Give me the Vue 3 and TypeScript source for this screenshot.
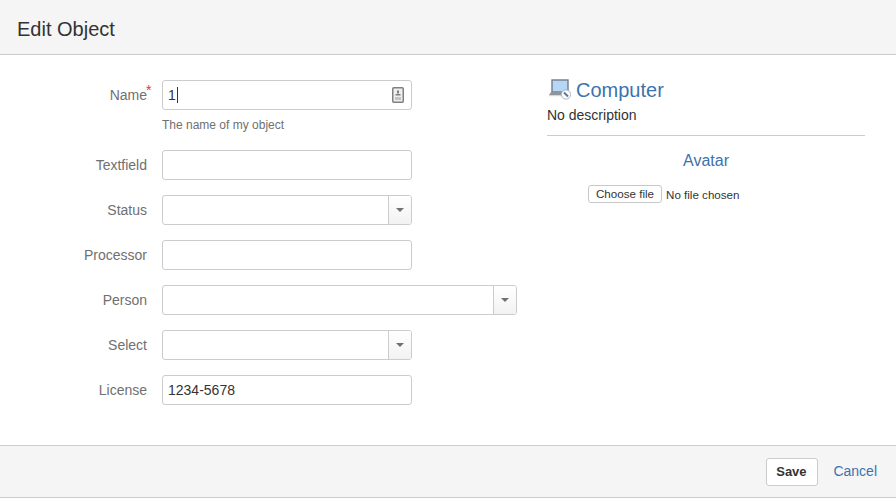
<template>
  <div class="dialog">
    <header class="dialog-header">
      <h2>Edit Object</h2>
    </header>

    <main class="dialog-body">
      <form class="fields" @submit.prevent>
        <div v-for="field in fields" :key="field.label" class="field">
          <label class="field-label">
            {{ field.label }}<span v-if="field.required" class="required">*</span>
          </label>
          <div class="field-main">
            <div class="control" :class="field.size">
              <div class="input-box">
                <span class="input-text">{{ field.value }}</span>
                <span v-if="field.caret" class="caret"></span>
                <svg v-if="field.caret" class="contact-icon" width="12" height="16" viewBox="0 0 12 16">
                  <rect x="0.75" y="0.75" width="10.5" height="14.5" rx="1" fill="#eee" stroke="#808080" stroke-width="1.5" />
                  <rect x="5" y="3.5" width="2" height="3" fill="#808080" />
                  <rect x="3.5" y="7" width="5" height="1.5" fill="#808080" />
                  <rect x="3" y="10" width="6" height="3" fill="#c4c4c4" />
                </svg>
              </div>
              <div v-if="field.select" class="select-btn"><span class="arrow"></span></div>
            </div>
            <div v-if="field.hint" class="hint">{{ field.hint }}</div>
          </div>
        </div>
      </form>

      <aside class="side">
        <div class="type-title">
          <svg class="type-icon" width="23" height="22" viewBox="0 0 23 22">
            <rect x="4" y="1" width="16" height="12" fill="#b5d7f5" stroke="#747c86" stroke-width="1.4" />
            <path d="M3 13 H19 L17 16 H1 Z" fill="#8f959c" />
            <rect x="1" y="16" width="14" height="1.2" fill="#d5d8db" />
            <circle cx="18" cy="15.5" r="4.6" fill="#fff" stroke="#a9b4bf" />
            <path d="M16 13.5 L20 17.5" stroke="#5b7896" stroke-width="2" />
          </svg>
          <span>Computer</span>
        </div>
        <p class="type-desc">No description</p>
        <hr class="divider" />
        <h3 class="avatar-title">Avatar</h3>
        <div class="file-row">
          <span class="file-btn">Choose file</span>
          <span class="file-text">No file chosen</span>
        </div>
      </aside>
    </main>

    <footer class="dialog-footer">
      <button class="save" type="button">Save</button>
      <a class="cancel" href="#" @click.prevent>Cancel</a>
    </footer>
  </div>
</template>

<script setup lang="ts">
interface Field {
  label: string
  value?: string
  required?: boolean
  caret?: boolean
  select?: boolean
  size?: 'wide'
  hint?: string
}

const fields: Field[] = [
  { label: 'Name', value: '1', required: true, caret: true, hint: 'The name of my object' },
  { label: 'Textfield' },
  { label: 'Status', select: true },
  { label: 'Processor' },
  { label: 'Person', select: true, size: 'wide' },
  { label: 'Select', select: true },
  { label: 'License', value: '1234-5678' }
]
</script>

<style>
html,
body {
  margin: 0;
  background: #fff;
}
</style>

<style scoped>
.dialog {
  width: 896px;
  height: 498px;
  display: flex;
  flex-direction: column;
  font-family: "Liberation Sans", Arial, sans-serif;
  font-size: 14px;
  color: #333;
  box-sizing: border-box;
  overflow: hidden;
}

.dialog-header {
  height: 55px;
  box-sizing: border-box;
  flex: none;
  display: flex;
  align-items: center;
  padding: 5px 17px 0;
  background: #f5f5f5;
  border-bottom: 1px solid #ccc;
}

.dialog-header h2 {
  margin: 0;
  font-size: 20px;
  font-weight: 400;
  color: #333;
}

.dialog-body {
  flex: 1;
  display: flex;
  padding-top: 25px;
}

.fields {
  width: 547px;
  flex: none;
  display: flex;
  flex-direction: column;
  gap: 15px;
}

.field {
  display: flex;
}

.field-label {
  width: 147px;
  flex: none;
  text-align: right;
  line-height: 30px;
  color: #707070;
  position: relative;
}

.required {
  position: absolute;
  left: 146px;
  top: -5px;
  color: #d04437;
  font-size: 14px;
}

.field-main {
  margin-left: 15px;
}

.control {
  width: 250px;
  height: 30px;
  display: flex;
  box-sizing: border-box;
  border: 1px solid #ccc;
  border-radius: 3.01px;
  background: #fff;
  overflow: hidden;
}

.control.wide {
  width: 355px;
}

.input-box {
  flex: 1;
  display: flex;
  align-items: center;
  padding-left: 5px;
  position: relative;
  line-height: 28px;
}

.input-text {
  color: #333;
}

.caret {
  width: 1px;
  height: 16px;
  margin-left: 1px;
  background: #333;
}

.contact-icon {
  position: absolute;
  right: 7px;
  top: 6px;
}

.select-btn {
  width: 22px;
  flex: none;
  border-left: 1px solid #ccc;
  background: linear-gradient(#fff, #f2f2f2);
  display: flex;
  align-items: center;
  justify-content: center;
}

.arrow {
  width: 0;
  height: 0;
  border-left: 4px solid transparent;
  border-right: 4px solid transparent;
  border-top: 4px solid #707070;
}

.hint {
  margin-top: 6px;
  font-size: 12px;
  line-height: 19px;
  color: #707070;
}

.side {
  width: 318px;
  flex: none;
}

.type-title {
  display: flex;
  align-items: center;
  height: 22px;
  margin-top: -1px;
  padding-left: 1px;
  gap: 5px;
  font-size: 20px;
  color: #3b73af;
}

.type-desc {
  margin: 4px 0 0;
  line-height: 20px;
  color: #333;
}

.divider {
  border: 0;
  border-top: 1px solid #ccc;
  margin: 10px 0 0;
}

.avatar-title {
  margin: 15px 0 0;
  font-size: 16px;
  line-height: 20px;
  font-weight: 400;
  text-align: center;
  color: #3b73af;
}

.file-row {
  display: flex;
  align-items: center;
  margin: 14px 0 0 41px;
  font-size: 11.6px;
  gap: 4px;
}

.file-btn {
  display: inline-block;
  box-sizing: border-box;
  height: 18px;
  line-height: 16px;
  padding: 0 7px;
  border: 1px solid #c8c8c8;
  border-radius: 3px;
  background: #fff;
  color: #333;
}

.file-text {
  color: #333;
}

.dialog-footer {
  height: 53px;
  box-sizing: border-box;
  flex: none;
  display: flex;
  align-items: center;
  justify-content: flex-end;
  padding-right: 19px;
  gap: 15px;
  background: #f5f5f5;
  border-top: 1px solid #ccc;
  border-bottom: 1px solid #ccc;
}

.save {
  width: 52px;
  height: 28px;
  padding: 0 2px 0 0;
  border: 1px solid #ccc;
  border-radius: 3px;
  background: #fff;
  font: bold 13px "Liberation Sans", Arial, sans-serif;
  color: #333;
}

.cancel {
  color: #3b73af;
  text-decoration: none;
  position: relative;
  top: -1px;
}
</style>
